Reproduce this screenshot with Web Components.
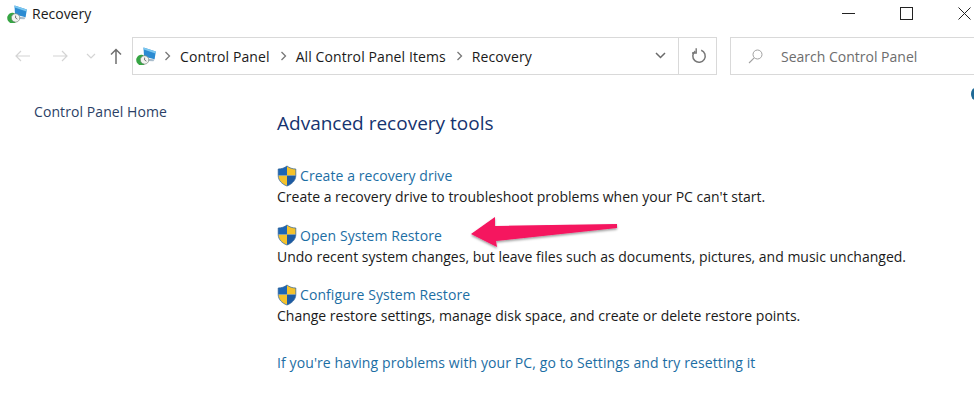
<!DOCTYPE html>
<html>
<head>
<meta charset="utf-8">
<title>Recovery</title>
<style>
  html, body { margin: 0; padding: 0; background: #fff; }
  body { width: 974px; height: 411px; overflow: hidden; position: relative; font-family: "Open Sans", "Noto Sans", sans-serif; }
</style>
</head>
<body>
<recovery-window></recovery-window>

<script>
const RECOVERY_ICON = `
  <svg viewBox="0 0 20 18" width="20" height="18">
    <path d="M7.5 .5 L19.8 4.6 L18.6 12.2 L8 9.5 Z" fill="#2b8bd2"/>
    <path d="M7.5 .5 L19.8 4.6 L19.5 6.4 L7.7 2.6 Z" fill="#7cc8f0"/>
    <path d="M11 11.5 L18.6 12.6 L17.4 14.2 L11.5 14 Z" fill="#a9bccb"/>
    <path d="M8 8.2 A5.4 5.4 0 1 0 8.6 17.6 L8 15.9 A3.6 3.6 0 0 1 5.2 10.2 Z" fill="#37a544"/>
    <circle cx="8.6" cy="12.9" r="4.2" fill="#f3f4f1" stroke="#77857b" stroke-width=".7"/>
    <path d="M8.6 10.6 V13 L10.4 14.2" fill="none" stroke="#555" stroke-width=".8"/>
    <path d="M.2 12 L4.2 9.2 V15 Z" fill="#37a544"/>
  </svg>`;

const SHIELD_ICON = `
  <svg viewBox="0 0 20 22" width="20" height="22">
    <path d="M10 1 C12.5 3 15.5 4 18.8 4 V10.6 H10 Z" fill="#f4c22b"/>
    <path d="M10 10.6 H1.2 C1.4 15.5 5 19.2 10 21 Z" fill="#f4c22b"/>
    <path d="M10 1 C7.5 3 4.5 4 1.2 4 V10.6 H10 Z" fill="#1d66b4"/>
    <path d="M10 10.6 H18.8 C18.6 15.5 15 19.2 10 21 Z" fill="#1d5ba2"/>
    <path d="M10 1 C7.5 3 4.5 4 1.2 4 V10.5 C1.2 15.5 5 19.2 10 21 C15 19.2 18.8 15.5 18.8 10.5 V4 C15.5 4 12.5 3 10 1 Z" fill="none" stroke="#2a5f96" stroke-width=".7"/>
  </svg>`;

class WinTitlebar extends HTMLElement {
  constructor() {
    super();
    this.attachShadow({ mode: "open" });
  }
  connectedCallback() {
    this.shadowRoot.innerHTML = `
      <style>
        :host { display: flex; align-items: center; height: 27px; padding-left: 7px; color: #1a1a1a; font-size: 14px; }
        .icon { display: flex; margin-right: 5px; }
        .title { flex: 1; }
        .ctrls { display: flex; align-items: center; }
        .ctrl { width: 46px; height: 27px; display: flex; align-items: center; justify-content: center; margin-left: 12px; }
        .ctrl:last-child { margin-right: -13px; }
      </style>
      <span class="icon">${RECOVERY_ICON}</span>
      <span class="title"><slot></slot></span>
      <div class="ctrls">
        <div class="ctrl"><svg width="13" height="13"><path d="M0 6.5 H13" stroke="#222" stroke-width="1"/></svg></div>
        <div class="ctrl"><svg width="13" height="13"><rect x=".5" y=".5" width="12" height="12" fill="none" stroke="#222"/></svg></div>
        <div class="ctrl"><svg width="13" height="13"><path d="M.5 .5 L12.5 12.5 M12.5 .5 L.5 12.5" stroke="#222" fill="none"/></svg></div>
      </div>
    `;
  }
}
customElements.define("win-titlebar", WinTitlebar);

class WinAddressbar extends HTMLElement {
  constructor() {
    super();
    this.attachShadow({ mode: "open" });
  }
  connectedCallback() {
    const sep = `<svg class="sep" width="7" height="10" viewBox="0 0 7 10"><path d="M1.5 1 L5.5 5 L1.5 9" fill="none" stroke="#777" stroke-width="1.3"/></svg>`;
    this.shadowRoot.innerHTML = `
      <style>
        :host { display: flex; align-items: center; height: 38px; margin-top: 10px; padding-left: 15px; font-size: 14px; }
        .nav { display: flex; align-items: center; width: 117px; flex: none; }
        .nav svg { flex: none; }
        .box { display: flex; align-items: center; height: 38px; border: 1px solid #d9d9d9; box-sizing: border-box; flex: none; }
        .path { width: 585px; }
        .crumbs { flex: 1; display: flex; align-items: center; padding-left: 3px; color: #1a1a1a; letter-spacing: .1px; }
        .crumbs span { display: flex; }
        .home { margin-right: 1px; }
        .sep { margin: 0 9px 0 7px; }
        .crumb { margin-right: 3px; }
        .drop { width: 36px; display: flex; justify-content: center; }
        .refresh { width: 38px; height: 100%; box-sizing: border-box; padding-left: 3px; display: flex; align-items: center; justify-content: center; border-left: 1px solid #d9d9d9; }
        .search { width: 250px; margin-left: 13px; padding-left: 17px; color: #6d6d6d; border-right: none; }
        .search svg { margin-right: 18px; }
      </style>
      <div class="nav">
        <svg width="16" height="12"><path d="M1 6 H15 M6 1 L1 6 L6 11" fill="none" stroke="#d4d4d4" stroke-width="1.2"/></svg>
        <svg style="margin-left:22px" width="16" height="12"><path d="M0 6 H14 M9 1 L14 6 L9 11" fill="none" stroke="#d4d4d4" stroke-width="1.2"/></svg>
        <svg style="margin-left:17px" width="10" height="7"><path d="M1 1 L5 5 L9 1" fill="none" stroke="#d4d4d4" stroke-width="1.2"/></svg>
        <svg style="margin-left:14px" width="12" height="16"><path d="M6 16 V1.5 M1 6.5 L6 1.5 L11 6.5" fill="none" stroke="#6f6f6f" stroke-width="1.5"/></svg>
      </div>
      <div class="box path">
        <div class="crumbs">
          <span class="home">${RECOVERY_ICON}</span>
          ${sep}<span class="crumb">Control Panel</span>
          ${sep}<span class="crumb">All Control Panel Items</span>
          ${sep}<span class="crumb">Recovery</span>
        </div>
        <div class="drop"><svg width="11" height="8"><path d="M1 1 L5.5 5.5 L10 1" fill="none" stroke="#6a6a6a" stroke-width="1.5"/></svg></div>
        <div class="refresh"><svg width="16" height="16" viewBox="0 0 16 16"><path d="M5 2.6 A6.2 6.2 0 1 0 11 2.6" fill="none" stroke="#777" stroke-width="1.5" transform="rotate(-8 8 8)"/><path d="M5.6 0.2 V5 H1.4" fill="none" stroke="#777" stroke-width="1.4" transform="translate(-.4 0)"/></svg></div>
      </div>
      <div class="box search">
        <svg width="15" height="15" viewBox="0 0 15 15"><circle cx="9.5" cy="5.5" r="4.5" fill="none" stroke="#a0a0a0"/><path d="M6.2 8.8 L1 14" stroke="#a0a0a0" stroke-width="1.1"/></svg>
        <span>Search Control Panel</span>
      </div>
    `;
  }
}
customElements.define("win-addressbar", WinAddressbar);

class RecoveryTask extends HTMLElement {
  constructor() {
    super();
    this.attachShadow({ mode: "open" });
  }
  connectedCallback() {
    const label = this.getAttribute("label");
    this.shadowRoot.innerHTML = `
      <style>
        :host { display: block; font-size: 14px; color: #1a1a1a; }
        .link { display: flex; align-items: center; height: 25px; color: #1c6ea4; letter-spacing: .07px; }
        .link svg { margin-right: 3px; }
        .desc { line-height: 17px; }
      </style>
      <div class="link">${SHIELD_ICON}<span>${label}</span></div>
      <div class="desc"><slot></slot></div>
    `;
  }
}
customElements.define("recovery-task", RecoveryTask);

class RecoveryWindow extends HTMLElement {
  constructor() {
    super();
    this.attachShadow({ mode: "open" });
  }
  connectedCallback() {
    this.shadowRoot.innerHTML = `
      <style>
        :host { display: block; position: relative; width: 974px; height: 411px; overflow: hidden; background: #fff; }
        .main { display: flex; }
        .side { width: 277px; box-sizing: border-box; padding: 27px 0 0 34px; font-size: 14px; color: #2b3f66; letter-spacing: .08px; }
        .content { flex: 1; padding-top: 35px; }
        h1 { margin: 0 0 27px; font-size: 19px; font-weight: 400; line-height: 26px; color: #15336f; }
        .tasks { display: flex; flex-direction: column; gap: 17.5px; }
        .bottom { margin-top: 29px; font-size: 14px; color: #1c6ea4; letter-spacing: .1px; }
        .arrow { position: absolute; left: 470px; top: 215px; }
        .blob { position: absolute; left: 971px; top: 88px; width: 8px; height: 12px; border-radius: 50%; background: #1f6a97; }
      </style>
      <win-titlebar>Recovery</win-titlebar>
      <win-addressbar></win-addressbar>
      <div class="main">
        <div class="side">Control Panel Home</div>
        <div class="content">
          <h1>Advanced recovery tools</h1>
          <div class="tasks">
            <recovery-task label="Create a recovery drive">Create a recovery drive to troubleshoot problems when your PC can't start.</recovery-task>
            <recovery-task label="Open System Restore">Undo recent system changes, but leave files such as documents, pictures, and music unchanged.</recovery-task>
            <recovery-task label="Configure System Restore">Change restore settings, manage disk space, and create or delete restore points.</recovery-task>
          </div>
          <div class="bottom">If you're having problems with your PC, go to Settings and try resetting it</div>
        </div>
      </div>
      <svg class="arrow" width="152" height="38" viewBox="0 0 152 38">
        <defs><filter id="s" x="-10%" y="-30%" width="120%" height="170%"><feDropShadow dx="0" dy="1.5" stdDeviation="1.2" flood-color="#000" flood-opacity=".4"/></filter></defs>
        <path d="M1 19 L25 2 L25 11 L147 9 L147 13 L26 26 L27 32 Z" fill="#f5135f" filter="url(#s)"/>
      </svg>
      <div class="blob"></div>
    `;
  }
}
customElements.define("recovery-window", RecoveryWindow);
</script>
</body>
</html>
